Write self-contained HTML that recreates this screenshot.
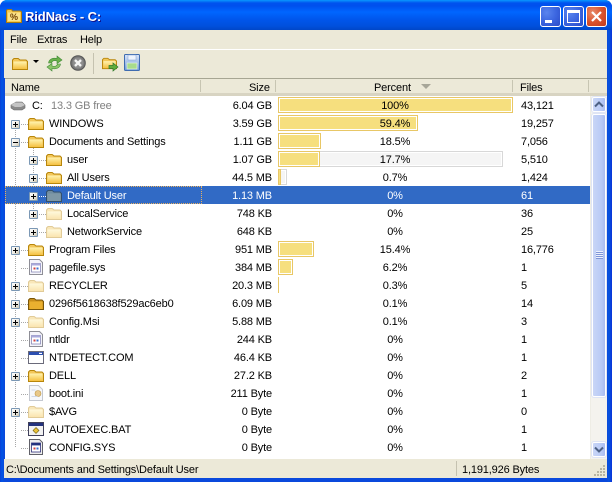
<!DOCTYPE html>
<html><head><meta charset="utf-8"><title>RidNacs - C:</title>
<style>
html,body{margin:0;padding:0;width:612px;height:482px;overflow:hidden;background:#fff}
*{box-sizing:border-box}
body{position:relative;font-family:"Liberation Sans",sans-serif;font-size:11px;letter-spacing:-.15px;color:#000}
.a{position:absolute}
#win{position:absolute;left:0;top:0;width:612px;height:482px;background:linear-gradient(90deg,#0a3fd8 0,#0055e5 2px,#0a49dc 4px,#0a49dc 607px,#0855dd 609px,#0831d9 612px);border-radius:7px 7px 0 0;overflow:hidden}
#title{position:absolute;left:0;top:0;width:612px;height:30px;background:linear-gradient(180deg,#0997ff 0,#0053ee 3px,#0050ee 6px,#0066ff 12px,#0055ea 20px,#0050dd 26px,#0046c8 30px)}
#ttext{position:absolute;left:25px;top:8px;color:#fff;font:bold 13px/17px "Liberation Sans",sans-serif;letter-spacing:-.1px;text-shadow:1px 1px 0 #0f1089}
.wb{position:absolute;top:6px;width:21px;height:21px;border:1px solid #fff;border-radius:3px;background:radial-gradient(circle at 30% 30%,#5a85ee 0,#3c66e0 50%,#2a4cc8 100%)}
#close{left:586px;background:radial-gradient(circle at 30% 30%,#e88c6c 0,#d9532e 50%,#c03a1c 100%)}
#menu{position:absolute;left:4px;top:30px;width:603px;height:20px;background:#ece9d8;border-bottom:1px solid #fff}
#tool{position:absolute;left:4px;top:50px;width:603px;height:28px;background:#ece9d8}
#menu span{position:absolute;top:1px;line-height:19px}
#hd{position:absolute;left:5px;top:78px;width:602px;height:18px;background:#ece9d8;border-top:1px solid #a7a693;border-bottom:3px solid #d8d4c2}
#hd span{position:absolute;top:3px;line-height:13px}
#hd i{position:absolute;top:1px;width:1px;height:12px;background:#c7c5b2}
#list{position:absolute;left:5px;top:96px;width:602px;height:363px;background:#fff;overflow:hidden}
.r{position:absolute;left:0;width:585px;height:18px;line-height:18px;white-space:nowrap}
.n{position:absolute;left:44px;top:1px}
.l2 .n{left:62px}
.s{position:absolute;left:0;width:267px;text-align:right;top:1px}
.p{position:absolute;left:273px;width:234px;text-align:center;top:1px}
.f{position:absolute;left:516px;top:1px}
.b,.t{position:absolute;left:273px;top:1px;height:16px}
.b{border:1px solid #e8c766;background:#f6df7e;box-shadow:inset 0 0 0 1px #fff}
.t{border:1px solid #d8d8d8;background:#f5f5f5;box-shadow:inset 0 0 0 1px #fff}
.r svg{position:absolute;top:1px;left:23px;width:16px;height:16px}
.l2 svg{left:41px}
.e{position:absolute;left:6px;top:6px;width:9px;height:9px;border:1px solid #7b98b5;background:linear-gradient(135deg,#fff,#ece9e0 60%,#c8c2ac);border-radius:1px}
.e:before{content:"";position:absolute;left:1px;top:3px;width:5px;height:1px;background:#000}
.e.pl:after{content:"";position:absolute;left:3px;top:1px;width:1px;height:5px;background:#000}
.l2 .e{left:24px}
.dh{position:absolute;left:16px;top:10px;width:7px;height:1px;background:repeating-linear-gradient(90deg,#a8a8a8 0,#a8a8a8 1px,transparent 1px,transparent 2px)}
.l2 .dh{left:34px}
.dv{position:absolute;width:1px;background:repeating-linear-gradient(180deg,#a8a8a8 0,#a8a8a8 1px,transparent 1px,transparent 2px)}
.sel{background:#316ac5;color:#fff}
.foc{position:absolute;left:0;top:0;width:197px;height:18px;border:1px dotted #e8b060}
.pale{opacity:.42}
#st{position:absolute;left:4px;top:459px;width:603px;height:19px;background:#ece9d8;line-height:19px}
#st span{position:absolute;top:2px;line-height:18px}
#sb{position:absolute;left:585px;top:0;width:17px;height:363px;background:#f4f3ee;border-left:1px solid #eeede5}
.sbtn,.thumb{position:absolute;left:1px;width:14px;border:1px solid #fff;border-radius:2px;background:linear-gradient(90deg,#c9d6f7,#b9caf5 70%,#a9bcf0);outline:1px solid #dfe5f5}
.gr{position:absolute;left:3px;width:7px;background:#eef2fd;border-bottom:1px solid #7f96d8;height:2px}
</style></head><body>
<svg width="0" height="0" style="position:absolute">
<defs>
<linearGradient id="gf" x1="0" y1="0" x2="0" y2="1"><stop offset="0" stop-color="#fff3b0"/><stop offset="1" stop-color="#f5c040"/></linearGradient>
<linearGradient id="gb" x1="0" y1="0" x2="0" y2="1"><stop offset="0" stop-color="#dbe6fa"/><stop offset="1" stop-color="#6d9ad8"/></linearGradient>
<symbol id="fo" viewBox="0 0 16 16"><path d="M.5 14.500V5l1.500-1.500h4.200L8 5h6l1.500 1.500v8z" fill="#f3c75a" stroke="#b8860b"/><path d="M1.500 6.500h13v7.500h-13z" fill="url(#gf)"/></symbol>
<symbol id="fd" viewBox="0 0 16 16"><path d="M.5 14.5V5l1.5-1.5h4.2L8 5h6l1.5 1.5v8z" fill="#c98f1c" stroke="#7a5608"/><path d="M1.5 6.500h13v7.500h-13z" fill="#eab02f"/></symbol>
<symbol id="fs" viewBox="0 0 16 16"><path d="M.5 14.5V5l1.5-1.5h4.2L8 5h6l1.5 1.5v8z" fill="#6f8ca0" stroke="#33506e"/><path d="M1.5 6.500h13v7.500h-13z" fill="#7f98a6"/></symbol>
<symbol id="sys" viewBox="0 0 16 16"><path d="M1.500 .5h10l3 3v12h-13z" fill="#f4f4fa" stroke="#8e8e96"/><rect x="3.500" y="4.500" width="9" height="8.500" fill="#fff" stroke="#8a8ab8" stroke-width=".8"/><rect x="3.500" y="4.500" width="9" height="2" fill="#a9a9dc"/><rect x="5.500" y="8.500" width="2" height="2" fill="#d04040"/><rect x="8.500" y="8.500" width="2" height="2" fill="#3a70d0"/></symbol>
<symbol id="exe" viewBox="0 0 16 16"><rect x=".5" y="2.5" width="15" height="12" fill="#fff" stroke="#6a6a7a"/><rect x="1" y="3" width="14" height="3" fill="#2c4fb0"/><rect x="11" y="3.8" width="3" height="1.2" fill="#fff"/></symbol>
<symbol id="bat" viewBox="0 0 16 16"><rect x=".5" y="1.5" width="15" height="13" fill="#f2f2f2" stroke="#40405a"/><rect x="1" y="2" width="14" height="3" fill="#23327e"/><path d="M8 6.5l3 3-3 3-3-3z" fill="#e9c23a" stroke="#6a5a10" stroke-width=".6"/></symbol>
<symbol id="cfg" viewBox="0 0 16 16"><path d="M1.500 .5h10l3 3v12h-13z" fill="#eee" stroke="#606068"/><rect x="3.500" y="4" width="9" height="9" fill="#fff" stroke="#30307a" stroke-width=".8"/><rect x="3.500" y="4" width="9" height="2.400" fill="#23327e"/><rect x="5.5" y="8.5" width="2" height="2" fill="#d04040"/><rect x="8.5" y="8.5" width="2" height="2" fill="#3a70d0"/></symbol>
<symbol id="ini" viewBox="0 0 16 16"><path d="M1.500 .5h9l4 4v11h-13z" fill="#f6f8fc" stroke="#c4c8d0"/><circle cx="10" cy="8.500" r="3" fill="#e8c88a" stroke="#c09848" stroke-width=".6"/><path d="M3.500 11.500h6" stroke="#d0d8e8"/><path d="M3.500 5h4" stroke="#d0d8e8"/></symbol>
</defs></svg>
<div id="win">
<div id="title"></div>
<svg class="a" style="left:6px;top:9px" width="16" height="14" viewBox="0 0 16 14"><path d="M.5 13.5V1.5l1-1h4l1 1.5h8l1 1v10.500z" fill="#f4c94e" stroke="#a87a10"/><path d="M2 3.500h12v8.500H2z" fill="#fbe38a"/><text x="4" y="11" font-family="Liberation Sans" font-size="9" font-weight="bold" fill="#704000">%</text></svg>
<div id="ttext">RidNacs - C:</div>
<div class="wb" style="left:540px"><div class="a" style="left:4px;top:13px;width:7px;height:3px;background:#fff"></div></div>
<div class="wb" style="left:563px"><div class="a" style="left:3px;top:3px;width:13px;height:13px;border:1px solid #fff;border-top:3px solid #fff"></div></div>
<div class="wb" id="close"><svg class="a" style="left:3px;top:3px" width="13" height="13" viewBox="0 0 13 13"><path d="M2 2l9 9M11 2l-9 9" stroke="#fff" stroke-width="2.200"/></svg></div>
<div id="menu"><span style="left:6px">File</span><span style="left:33px">Extras</span><span style="left:76px">Help</span></div>
<div id="tool">
<svg class="a" style="left:8px;top:5px" width="16" height="16" viewBox="0 0 16 16"><use href="#fo"/></svg>
<div class="a" style="left:29px;top:10px;width:0;height:0;border:3px solid transparent;border-top:3px solid #000"></div>
<svg class="a" style="left:42px;top:5px" width="17" height="17" viewBox="0 0 17 17"><path d="M2.500 8C3 4 7 2.500 11 3.500V1l5 4-5 3.500V6C8 5 6 6 5.500 8z" fill="#6ab04a" stroke="#3f8a36" stroke-width=".6"/><path d="M14.500 9C14 13 10 14.500 6 13.500V16l-5-4 5-3.500V11c3 1 5 0 5.500-2z" fill="#8cc468" stroke="#3f8a36" stroke-width=".6"/></svg>
<svg class="a" style="left:66px;top:5px" width="16" height="16" viewBox="0 0 16 16"><circle cx="8" cy="8" r="7.300" fill="#777" stroke="#555"/><circle cx="8" cy="8" r="5.500" fill="#8d8d8d"/><path d="M5 5l6 6M11 5l-6 6" stroke="#f4f4f4" stroke-width="2.400"/></svg>
<div class="a" style="left:89px;top:3px;width:1px;height:21px;background:#c5c2b0"></div>
<svg class="a" style="left:98px;top:5px" width="17" height="17" viewBox="0 0 17 17"><use href="#fo" width="15" height="15"/><path d="M7 10.500h4V8l5 4-5 4v-2.500H7z" fill="#62ad3c" stroke="#2f7a2a" stroke-width=".7"/></svg>
<svg class="a" style="left:120px;top:4px" width="16" height="17" viewBox="0 0 16 17"><rect x=".5" y=".5" width="15" height="16" rx="1" fill="url(#gb)" stroke="#3f6cb0"/><rect x="4" y="1" width="8" height="5" fill="#eef4fd" stroke="#7c9ed0" stroke-width=".5"/><rect x="3" y="9" width="10" height="6" fill="#a8dc8c" stroke="#f0f8e8" stroke-width=".6"/></svg>
</div>
<div id="hd">
<span style="left:6px">Name</span><i style="left:195px"></i>
<span style="left:244px">Size</span><i style="left:270px"></i>
<span style="left:369px">Percent</span><svg class="a" style="left:416px;top:5px" width="10" height="6"><path d="M0 0h10L5 5z" fill="#a7a698"/></svg><i style="left:507px"></i>
<span style="left:515px">Files</span><i style="left:583px"></i>
</div>
<div id="list">
<div class="dv" style="left:10px;top:24px;height:327px"></div>
<div class="dv" style="left:28px;top:48px;height:77px"></div>

<div class="r" style="top:0"><svg style="left:5px" viewBox="0 0 16 16"><path d="M1 8l5-3h6l3 3v3l-3 2H4l-3-2z" fill="#8a8a8a" stroke="#666" stroke-width=".6"/><path d="M1 8l4-2.500h7L15 8l-4 2H5z" fill="#c4c4c4"/></svg><span class="n" style="left:27px">C:</span><span class="n" style="left:46px;color:#808080">13.3 GB free</span><span class="s">6.04 GB</span><div class="b" style="width:235px"></div><span class="p">100%</span><span class="f">43,121</span></div>

<div class="r" style="top:18px"><div class="dh"></div><div class="e pl"></div><svg><use href="#fo"/></svg><span class="n">WINDOWS</span><span class="s">3.59 GB</span><div class="b" style="width:140px"></div><span class="p">59.4%</span><span class="f">19,257</span></div>

<div class="r" style="top:36px"><div class="dh"></div><div class="e"></div><svg><use href="#fo"/></svg><span class="n">Documents and Settings</span><span class="s">1.11 GB</span><div class="b" style="width:43px"></div><span class="p">18.5%</span><span class="f">7,056</span></div>

<div class="r l2" style="top:54px"><div class="dh"></div><div class="e pl"></div><svg><use href="#fo"/></svg><span class="n">user</span><span class="s">1.07 GB</span><div class="t" style="width:225px"></div><div class="b" style="width:42px"></div><span class="p">17.7%</span><span class="f">5,510</span></div>

<div class="r l2" style="top:72px"><div class="dh"></div><div class="e pl"></div><svg><use href="#fo"/></svg><span class="n">All Users</span><span class="s">44.5 MB</span><div class="t" style="width:9px"></div><div class="b" style="width:3px;box-shadow:none"></div><span class="p">0.7%</span><span class="f">1,424</span></div>

<div class="r l2 sel" style="top:90px;width:585px"><div class="foc"></div><div class="dh" style="background:repeating-linear-gradient(90deg,#fff 0,#fff 1px,transparent 1px,transparent 2px)"></div><div class="e pl"></div><svg><use href="#fs"/></svg><span class="n">Default User</span><span class="s">1.13 MB</span><span class="p">0%</span><span class="f">61</span></div>

<div class="r l2" style="top:108px"><div class="dh"></div><div class="e pl"></div><svg class="pale"><use href="#fo"/></svg><span class="n">LocalService</span><span class="s">748 KB</span><span class="p">0%</span><span class="f">36</span></div>

<div class="r l2" style="top:126px"><div class="dh"></div><div class="e pl"></div><svg class="pale"><use href="#fo"/></svg><span class="n">NetworkService</span><span class="s">648 KB</span><span class="p">0%</span><span class="f">25</span></div>

<div class="r" style="top:144px"><div class="dh"></div><div class="e pl"></div><svg><use href="#fo"/></svg><span class="n">Program Files</span><span class="s">951 MB</span><div class="b" style="width:36px"></div><span class="p">15.4%</span><span class="f">16,776</span></div>

<div class="r" style="top:162px"><div class="dh"></div><svg><use href="#sys"/></svg><span class="n">pagefile.sys</span><span class="s">384 MB</span><div class="b" style="width:15px"></div><span class="p">6.2%</span><span class="f">1</span></div>

<div class="r" style="top:180px"><div class="dh"></div><div class="e pl"></div><svg class="pale"><use href="#fo"/></svg><span class="n">RECYCLER</span><span class="s">20.3 MB</span><div class="b" style="width:1px;box-shadow:none;border-right:0"></div><span class="p">0.3%</span><span class="f">5</span></div>

<div class="r" style="top:198px"><div class="dh"></div><div class="e pl"></div><svg><use href="#fd"/></svg><span class="n">0296f5618638f529ac6eb0</span><span class="s">6.09 MB</span><span class="p">0.1%</span><span class="f">14</span></div>

<div class="r" style="top:216px"><div class="dh"></div><div class="e pl"></div><svg class="pale"><use href="#fo"/></svg><span class="n">Config.Msi</span><span class="s">5.88 MB</span><span class="p">0.1%</span><span class="f">3</span></div>

<div class="r" style="top:234px"><div class="dh"></div><svg><use href="#sys"/></svg><span class="n">ntldr</span><span class="s">244 KB</span><span class="p">0%</span><span class="f">1</span></div>

<div class="r" style="top:252px"><div class="dh"></div><svg><use href="#exe"/></svg><span class="n">NTDETECT.COM</span><span class="s">46.4 KB</span><span class="p">0%</span><span class="f">1</span></div>

<div class="r" style="top:270px"><div class="dh"></div><div class="e pl"></div><svg><use href="#fo"/></svg><span class="n">DELL</span><span class="s">27.2 KB</span><span class="p">0%</span><span class="f">2</span></div>

<div class="r" style="top:288px"><div class="dh"></div><svg><use href="#ini"/></svg><span class="n">boot.ini</span><span class="s">211 Byte</span><span class="p">0%</span><span class="f">1</span></div>

<div class="r" style="top:306px"><div class="dh"></div><div class="e pl"></div><svg class="pale"><use href="#fo"/></svg><span class="n">$AVG</span><span class="s">0 Byte</span><span class="p">0%</span><span class="f">0</span></div>

<div class="r" style="top:324px"><div class="dh"></div><svg><use href="#bat"/></svg><span class="n">AUTOEXEC.BAT</span><span class="s">0 Byte</span><span class="p">0%</span><span class="f">1</span></div>

<div class="r" style="top:342px"><div class="dh"></div><svg><use href="#cfg"/></svg><span class="n">CONFIG.SYS</span><span class="s">0 Byte</span><span class="p">0%</span><span class="f">1</span></div>

<div id="sb">
<div class="sbtn" style="top:1px;height:15px"><svg class="a" style="left:1px;top:3px" width="10" height="7"><path d="M1 5.500l4-4 4 4" fill="none" stroke="#4d6185" stroke-width="2"/></svg></div>
<div class="thumb" style="top:18px;height:283px"><div class="gr" style="top:136px"></div><div class="gr" style="top:138px"></div><div class="gr" style="top:140px"></div><div class="gr" style="top:142px"></div></div>
<div class="sbtn" style="top:346px;height:15px"><svg class="a" style="left:1px;top:3px" width="10" height="7"><path d="M1 1.500l4 4 4-4" fill="none" stroke="#4d6185" stroke-width="2"/></svg></div>
</div>
</div>
<div id="st"><span style="left:2px">C:\Documents and Settings\Default User</span><div class="a" style="left:452px;top:2px;width:1px;height:15px;background:#c5c2b0"></div><span style="left:458px">1,191,926 Bytes</span>
<svg class="a" style="left:590px;top:6px" width="12" height="12"><g fill="#b8b5a2"><rect x="9" y="0" width="2" height="2"/><rect x="6" y="3" width="2" height="2"/><rect x="9" y="3" width="2" height="2"/><rect x="3" y="6" width="2" height="2"/><rect x="6" y="6" width="2" height="2"/><rect x="9" y="6" width="2" height="2"/><rect x="0" y="9" width="2" height="2"/><rect x="3" y="9" width="2" height="2"/><rect x="6" y="9" width="2" height="2"/><rect x="9" y="9" width="2" height="2"/></g></svg>
</div>
</div>
</body></html>
